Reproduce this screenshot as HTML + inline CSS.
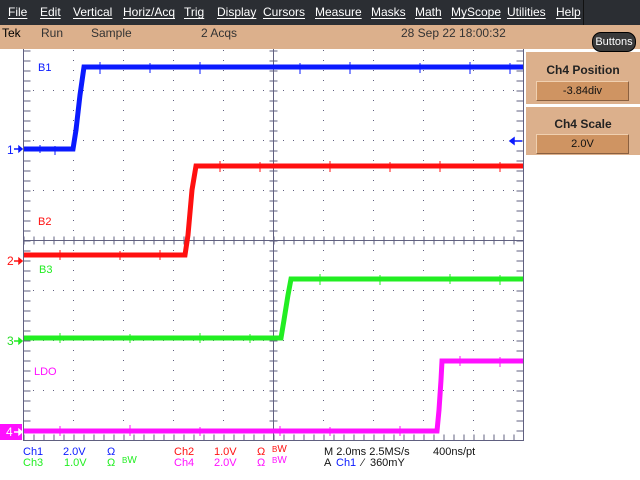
<!DOCTYPE html>
<html><head><meta charset="utf-8"><style>
html,body{margin:0;padding:0;width:640px;height:480px;overflow:hidden;background:#fff;font-family:"Liberation Sans",sans-serif;}
.menu{position:absolute;left:0;top:0;width:640px;height:25px;background:#2b2e33;color:#fff;font-size:12px;}
.menu span{position:absolute;top:5px;text-decoration:underline;text-decoration-thickness:1px;text-underline-offset:2px;}
.status{position:absolute;left:0;top:25px;width:640px;height:24px;background:#dcb08c;font-size:12px;color:#333;}
.status span{position:absolute;top:1px;}
.t{position:absolute;font-size:11px;white-space:nowrap;}
</style></head><body>
<div class="menu">
<span style="left:8px">File</span><span style="left:40px">Edit</span><span style="left:73px">Vertical</span><span style="left:123px">Horiz/Acq</span><span style="left:184px">Trig</span><span style="left:217px">Display</span><span style="left:263px">Cursors</span><span style="left:315px">Measure</span><span style="left:371px">Masks</span><span style="left:415px">Math</span><span style="left:451px">MyScope</span><span style="left:507px">Utilities</span><span style="left:556px">Help</span>
<div style="position:absolute;left:583px;top:0;width:1px;height:25px;background:#111"></div>
</div>
<div class="status">
<span style="left:2px;color:#000">Tek</span><span style="left:41px">Run</span><span style="left:91px">Sample</span><span style="left:201px">2 Acqs</span><span style="left:401px">28 Sep 22 18:00:32</span>
</div>
<div style="position:absolute;left:526px;top:49px;width:114px;height:106px;background:#dcb08c"></div>
<div style="position:absolute;left:526px;top:49px;width:114px;height:3px;background:#fff"></div>
<div style="position:absolute;left:526px;top:104px;width:114px;height:3px;background:#fff"></div>
<div style="position:absolute;left:592px;top:32px;width:42px;height:18px;background:#3a3a3a;border:1px solid #000;border-radius:9px;color:#fff;font-size:11px;text-align:center;line-height:18px">Buttons</div>
<div style="position:absolute;left:526px;top:63px;width:114px;text-align:center;font-weight:bold;font-size:12px;color:#222">Ch4 Position</div>
<div style="position:absolute;left:536px;top:81px;width:91px;height:18px;background:#cf9462;border:1px solid #8a6040;border-top-color:#f0d0b0;border-left-color:#f0d0b0;text-align:center;font-size:11px;line-height:18px;color:#111">-3.84div</div>
<div style="position:absolute;left:526px;top:117px;width:114px;text-align:center;font-weight:bold;font-size:12px;color:#222">Ch4 Scale</div>
<div style="position:absolute;left:536px;top:134px;width:91px;height:18px;background:#cf9462;border:1px solid #8a6040;border-top-color:#f0d0b0;border-left-color:#f0d0b0;text-align:center;font-size:11px;line-height:18px;color:#111">2.0V</div>

<svg width="640" height="480" style="position:absolute;left:0;top:0" xmlns="http://www.w3.org/2000/svg">
<defs><clipPath id="c"><rect x="0" y="49" width="640" height="431"/></clipPath></defs>
<g clip-path="url(#c)">
<g stroke="#606080" stroke-width="1" fill="none" shape-rendering="crispEdges">
<g stroke-dasharray="1 9">
<line x1="73.5" y1="50" x2="73.5" y2="440"/><line x1="123.5" y1="50" x2="123.5" y2="440"/><line x1="173.5" y1="50" x2="173.5" y2="440"/><line x1="223.5" y1="50" x2="223.5" y2="440"/><line x1="323.5" y1="50" x2="323.5" y2="440"/><line x1="373.5" y1="50" x2="373.5" y2="440"/><line x1="423.5" y1="50" x2="423.5" y2="440"/><line x1="473.5" y1="50" x2="473.5" y2="440"/>
<line x1="33" y1="90.5" x2="523" y2="90.5"/><line x1="33" y1="140.5" x2="523" y2="140.5"/><line x1="33" y1="190.5" x2="523" y2="190.5"/><line x1="33" y1="290.5" x2="523" y2="290.5"/><line x1="33" y1="340.5" x2="523" y2="340.5"/><line x1="33" y1="390.5" x2="523" y2="390.5"/>
</g>
<rect x="23.5" y="40.5" width="500" height="400"/>
<line x1="273.5" y1="40" x2="273.5" y2="440"/>
<line x1="23" y1="240.5" x2="523" y2="240.5"/>
<line x1="23" y1="240.5" x2="523" y2="240.5" stroke-dasharray="1 9" stroke-width="8" transform="translate(0.5 0)"/>
<line x1="273.5" y1="40" x2="273.5" y2="440" stroke-dasharray="1 9" stroke-width="8" transform="translate(0 0.5)"/>
<line x1="23" y1="43.5" x2="523" y2="43.5" stroke-dasharray="1 9" stroke-width="6" transform="translate(0.5 0)"/>
<line x1="23" y1="437.5" x2="523" y2="437.5" stroke-dasharray="1 9" stroke-width="6" transform="translate(0.5 0)"/>
<line x1="27" y1="40" x2="27" y2="440" stroke-dasharray="1 9" stroke-width="7" transform="translate(0 0.5)"/>
<line x1="520" y1="40" x2="520" y2="440" stroke-dasharray="1 9" stroke-width="7" transform="translate(0 0.5)"/>
</g>
<g fill="none" stroke-width="5" stroke-linejoin="miter">
<polyline stroke="#0a1aff" points="24,149 73,149 76,130 80,95 84,67 523,67"/>
<polyline stroke="#ff1010" points="24,255 185,255 188,235 192,190 196,166 523,166"/>
<polyline stroke="#22ee22" points="24,338 281,338 284,320 288,295 291,279 523,279"/>
<polyline stroke="#ff10ff" points="24,431 437,431 439,410 441,380 442,361 523,361"/>
</g>
<g stroke-width="1" shape-rendering="crispEdges">
<path stroke="#0a1aff" d="M100 62v12M150 63v10M200 62v12M300 63v11M350 62v12M420 63v10M470 62v12M510 63v11M40 145v8M55 146v9"/>
<path stroke="#ff1010" d="M220 161v11M260 162v10M330 161v11M390 162v10M440 161v11M500 162v10M60 250v10M120 251v9M160 250v10"/>
<path stroke="#22ee22" d="M60 333v10M130 334v9M200 333v10M250 334v9M320 274v11M380 275v10M450 274v10M500 275v10"/>
<path stroke="#ff10ff" d="M60 426v10M130 425v11M200 427v9M280 426v10M330 427v9M400 426v10M460 356v10M500 357v10"/>
</g>
<polygon points="67,40 79,40 73,47" fill="#1fa0e8"/>
<path d="M510 141h12M510 141l4-3v6z" stroke="#0a1aff" fill="#0a1aff" stroke-width="1.5"/>
</g>
<rect x="0" y="424" width="22" height="16" fill="#ff10ff"/>
<g stroke-width="1.5">
<path d="M14 149h8M22 149l-3-2.5v5z" stroke="#0a1aff" fill="#0a1aff"/>
<path d="M14 261h8M22 261l-3-2.5v5z" stroke="#ff1010" fill="#ff1010"/>
<path d="M14 341h8M22 341l-3-2.5v5z" stroke="#22ee22" fill="#22ee22"/>
<path d="M14 432h8M22 432l-3-2.5v5z" stroke="#fff" fill="#fff"/>
</g>
</svg>
<div class="t" style="left:7px;top:143px;color:#0a1aff;font-size:12px">1</div>
<div class="t" style="left:7px;top:254px;color:#ff1010;font-size:12px">2</div>
<div class="t" style="left:7px;top:334px;color:#22dd22;font-size:12px">3</div>
<div class="t" style="left:6px;top:425px;color:#fff;font-size:12px">4</div>
<div class="t" style="left:38px;top:62px;color:#0a1aff">B1</div>
<div class="t" style="left:38px;top:216px;color:#ff1010">B2</div>
<div class="t" style="left:39px;top:264px;color:#22ee22">B3</div>
<div class="t" style="left:34px;top:366px;color:#ff10ff">LDO</div>
<div class="t" style="left:23px;top:446px;color:#0a1aff">Ch1</div>
<div class="t" style="left:63px;top:446px;color:#0a1aff">2.0V</div>
<div class="t" style="left:107px;top:446px;color:#0a1aff">Ω</div>
<div class="t" style="left:174px;top:446px;color:#ff1010">Ch2</div>
<div class="t" style="left:214px;top:446px;color:#ff1010">1.0V</div>
<div class="t" style="left:257px;top:446px;color:#ff1010">Ω</div>
<div class="t" style="left:272px;top:444px;color:#ff1010;font-size:8px">B<span style="font-size:10px">W</span></div>
<div class="t" style="left:324px;top:446px;color:#111">M 2.0ms 2.5MS/s</div>
<div class="t" style="left:433px;top:446px;color:#111">400ns/pt</div>
<div class="t" style="left:23px;top:457px;color:#22ee22">Ch3</div>
<div class="t" style="left:64px;top:457px;color:#22ee22">1.0V</div>
<div class="t" style="left:107px;top:457px;color:#22ee22">Ω</div>
<div class="t" style="left:122px;top:455px;color:#22ee22;font-size:8px">B<span style="font-size:10px">W</span></div>
<div class="t" style="left:174px;top:457px;color:#ff10ff">Ch4</div>
<div class="t" style="left:214px;top:457px;color:#ff10ff">2.0V</div>
<div class="t" style="left:257px;top:457px;color:#ff10ff">Ω</div>
<div class="t" style="left:272px;top:455px;color:#ff10ff;font-size:8px">B<span style="font-size:10px">W</span></div>
<div class="t" style="left:324px;top:457px;color:#111">A</div>
<div class="t" style="left:336px;top:457px;color:#0a1aff">Ch1</div>
<div class="t" style="left:362px;top:457px;color:#111">⁄&nbsp; 360mY</div>
</body></html>
